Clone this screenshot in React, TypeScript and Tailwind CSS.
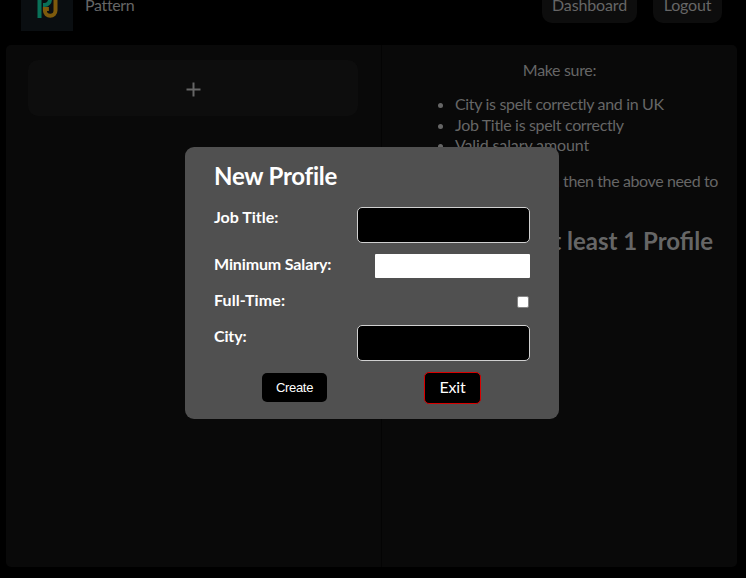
import React from "react";

function Logo() {
  return (
    <div className="h-[52px] w-[52px] shrink-0 bg-[#0a0e11]">
      <svg viewBox="0 0 52 52" className="h-full w-full" fill="none" strokeWidth="4">
        <path d="M18.500 39V15h5a5.500 5.500 0 0 1 5.500 5.500a5.500 5.500 0 0 1-5.500 5.500h-1.500" stroke="#097058" />
        <path d="M34.500 14v17.500a5.300 5.300 0 0 1-10.600 0v-1.500h4" stroke="#7d5a0c" />
      </svg>
    </div>
  );
}

function Header() {
  return (
    <header className="-mt-[21px] flex h-[66px] shrink-0 items-start pr-6 pl-[21px]">
      <Logo />
      <span className="mt-4 ml-3 leading-5 tracking-[-0.35px]">Pattern</span>
      <nav className="ml-auto flex gap-4 tracking-[-0.15px]">
        <a className="flex h-11 w-[95px] items-center justify-center rounded-[10px] bg-[#0d0d0d] pt-2">Dashboard</a>
        <a className="flex h-11 w-[69px] items-center justify-center rounded-[10px] bg-[#0d0d0d] pt-2">Logout</a>
      </nav>
    </header>
  );
}

function Guidance() {
  return (
    <section className="flex-1 overflow-hidden px-[18px] pt-[14px]">
      <p className="text-center leading-[21px] tracking-[-0.33px]">Make sure:</p>
      <ul className="mt-[14px] list-disc pl-[55px] leading-[20.5px] tracking-[-0.33px]">
        <li>City is spelt correctly and in UK</li>
        <li>Job Title is spelt correctly</li>
        <li className="tracking-[-0.12px]">Valid salary amount</li>
      </ul>
      <p className="mt-[14px] mr-px flex justify-end leading-[21px] tracking-[-0.38px] whitespace-nowrap">
        If no jobs are shown then the above need to
      </p>
      <h2 className="mt-[34px] mr-[6px] flex justify-end text-2xl leading-8 font-bold whitespace-nowrap">
        Create at least 1 Profile
      </h2>
    </section>
  );
}

function ProfileDialog() {
  return (
    <form className="absolute top-[146.5px] left-[184.5px] flex h-[272px] w-[374.5px] flex-col rounded-[9px] bg-[#505050] px-[29.5px] text-white">
      <h2 className="mt-3 text-2xl leading-[33px] font-bold tracking-[-0.22px]">New Profile</h2>
      <div className="mt-[15px] flex h-9 items-start justify-between">
        <label className="leading-5 font-bold">Job Title:</label>
        <input type="text" className="h-9 w-[173px] rounded-[5px] border border-[#d0d0d0] bg-black px-2" />
      </div>
      <div className="mt-[11px] flex h-6 items-start justify-between">
        <label className="leading-5 font-bold tracking-[-0.13px]">Minimum Salary:</label>
        <input type="number" className="h-6 w-[155px] rounded-[1px] bg-white px-1 text-black" />
      </div>
      <div className="mt-3 flex h-6 items-start justify-between">
        <label className="leading-5 font-bold tracking-[0.1px]">Full-Time:</label>
        <input type="checkbox" className="mt-[6px] mr-px h-3 w-3 appearance-none rounded-[2px] border border-[#858585] bg-white" />
      </div>
      <div className="mt-[11px] flex h-9 items-start justify-between">
        <label className="mt-px leading-5 font-bold tracking-[-0.15px]">City:</label>
        <input type="text" className="h-9 w-[173px] rounded-[5px] border border-[#d0d0d0] bg-black px-2" />
      </div>
      <div className="mt-[11px] flex h-8 items-center pl-12">
        <button type="submit" className="h-[29px] w-[65px] rounded-[5px] bg-black font-['Liberation_Sans',sans-serif] text-[13px] tracking-[-0.3px]">
          Create
        </button>
        <button type="button" className="ml-[97px] h-8 w-[57px] rounded-[5px] border border-[#d90000] bg-black pb-0.5 tracking-[-0.2px]">
          Exit
        </button>
      </div>
    </form>
  );
}

export default function App() {
  return (
    <div className="relative flex h-[578px] w-[746px] flex-col overflow-hidden bg-black font-[Lato,sans-serif] text-base text-[#666666]">
      <Header />
      <main className="mr-[9px] ml-[6px] flex h-[522px] overflow-hidden rounded-[5px] bg-[#090909]">
        <section className="w-[376px] border-r border-[#040404] pt-[15px] pr-[23px] pl-[22px]">
          <button className="flex h-14 w-[330px] items-center justify-center rounded-[10px] bg-[#0d0d0d]">
            <svg width="15" height="15" viewBox="0 0 15 15" stroke="#666666" strokeWidth="2" className="mt-0.5">
              <path d="M7.500 .5v14M.5 7.500h14" />
            </svg>
          </button>
        </section>
        <Guidance />
      </main>
      <ProfileDialog />
    </div>
  );
}
